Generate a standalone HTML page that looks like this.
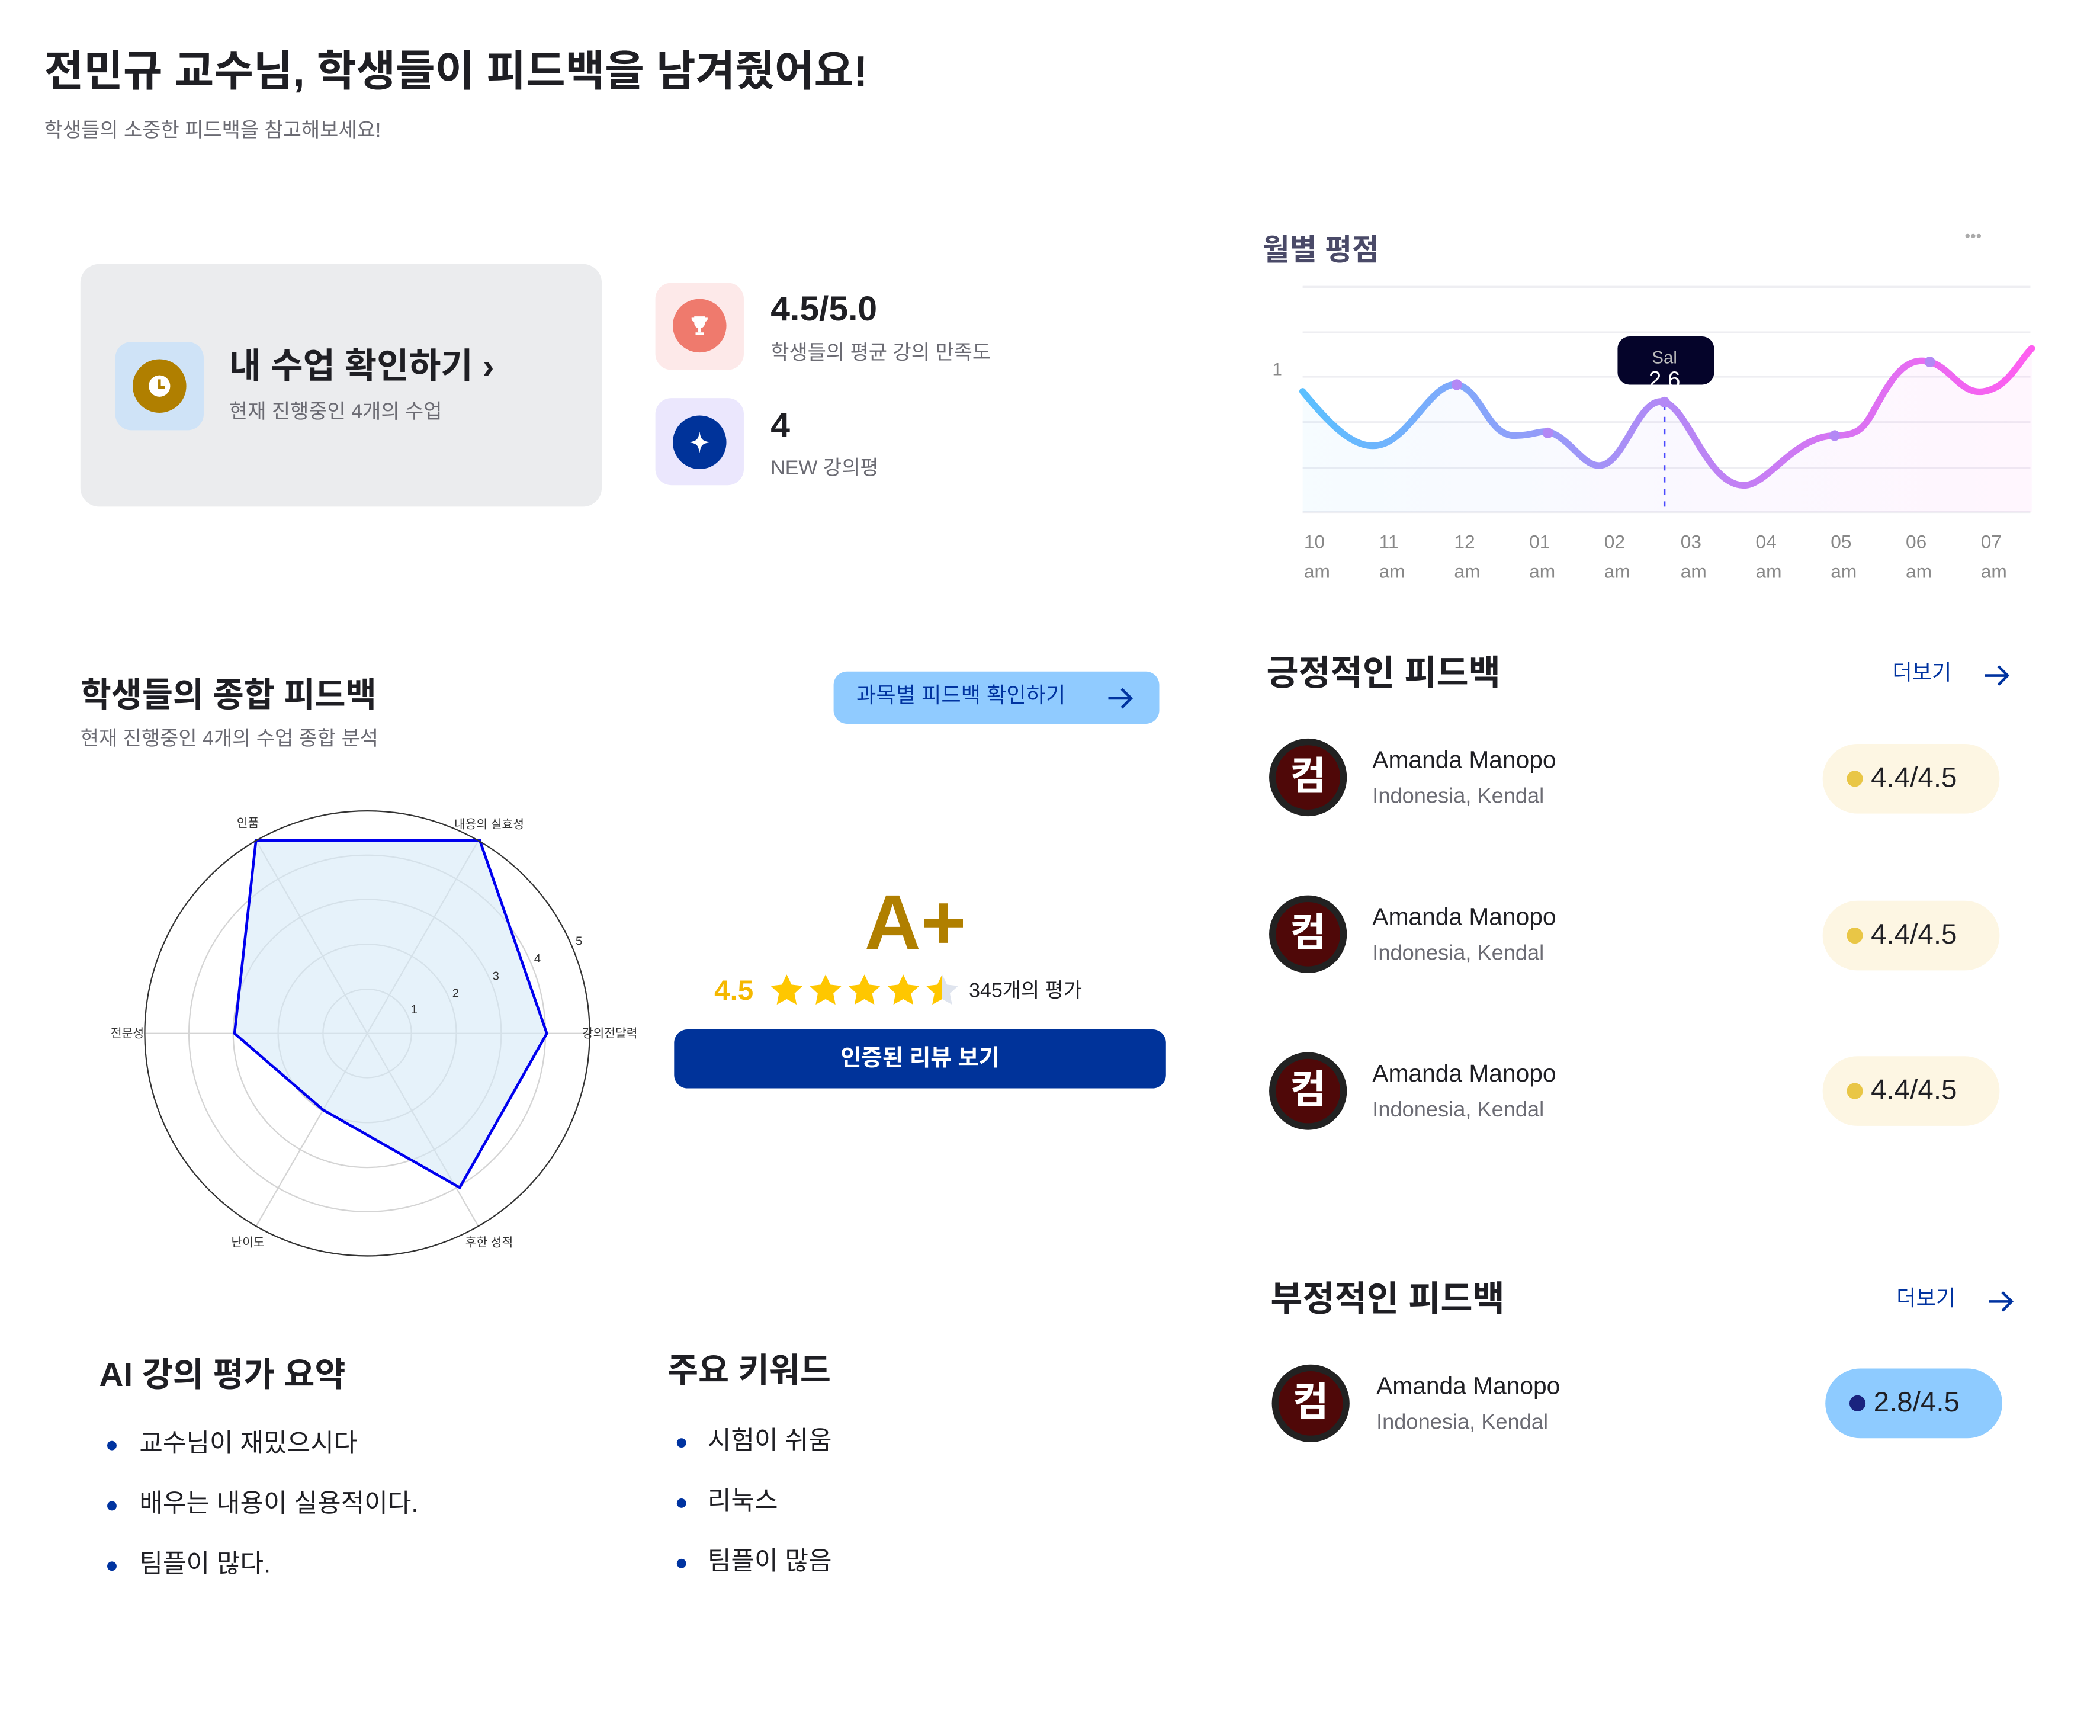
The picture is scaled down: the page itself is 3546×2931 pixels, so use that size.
<!DOCTYPE html>
<html><head><meta charset="utf-8"><style>
html,body{margin:0;padding:0;background:#fff;overflow:hidden}
body{width:3546px;height:2925px}
#w{position:absolute;left:0;top:0;width:1570px;height:1295px;transform:scale(2.263);transform-origin:0 0;font-family:"Liberation Sans","Noto Sans CJK KR",sans-serif;color:#1f1f24}
.t{position:absolute;white-space:nowrap;line-height:1}
.b{font-weight:700}
.g{color:#6b6b73}
.box{position:absolute;border-radius:12px}
.circ{position:absolute;border-radius:50%}
.av{position:absolute;width:48px;height:48px;border-radius:50%;background:#4f0808;border:5px solid #222;color:#fff;font-weight:700;font-size:29px;line-height:48px;text-align:center}
.pill{position:absolute;width:132px;height:52px;border-radius:26px;font-size:21px;line-height:52px}
.pill i{position:absolute;left:18px;top:20px;width:12px;height:12px;border-radius:50%}
.pill span{position:absolute;left:36px}
.dot{position:absolute;width:7px;height:7px;border-radius:50%;background:#0033a0}
</style></head><body><div id="w">

<div class="t b" style="left:33px;top:37px;font-size:32px">전민규 교수님, 학생들이 피드백을 남겨줬어요!</div>
<div class="t g" style="left:33px;top:90px;font-size:15px">학생들의 소중한 피드백을 참고해보세요!</div>

<div class="box" style="left:60px;top:197px;width:389px;height:181px;background:#ebecee;border-radius:14px"></div>
<div class="box" style="left:86px;top:255px;width:66px;height:66px;background:#cfe3f7"></div>
<div class="circ" style="left:99px;top:268px;width:40px;height:40px;background:#b07f00"></div>
<div class="circ" style="left:111px;top:280px;width:16px;height:16px;background:#fff"></div>
<div style="position:absolute;left:118px;top:283px;width:2px;height:6px;background:#b07f00"></div>
<div style="position:absolute;left:118px;top:288px;width:5px;height:2px;background:#b07f00"></div>
<div class="t b" style="left:171px;top:260px;font-size:26px">내 수업 확인하기 ›</div>
<div class="t g" style="left:171px;top:300px;font-size:15px">현재 진행중인 4개의 수업</div>

<div class="box" style="left:489px;top:211px;width:66px;height:65px;background:#fde9e9"></div>
<div class="circ" style="left:502px;top:223px;width:40px;height:40px;background:#ef7a6d"></div>
<svg style="position:absolute;left:512px;top:233px" width="20" height="20" viewBox="0 0 20 20"><path d="M6 3h8v5a4 4 0 0 1-8 0z M4 4h2v3a2 2 0 0 1-2-2z M16 4h-2v3a2 2 0 0 0 2-2z" fill="#fff"/><rect x="9" y="11" width="2" height="4" fill="#fff"/><rect x="7" y="15" width="6" height="2" fill="#fff"/></svg>
<div class="t" style="left:575px;top:217px;font-size:26px;font-weight:600">4.5/5.0</div>
<div class="t g" style="left:575px;top:256px;font-size:15px">학생들의 평균 강의 만족도</div>

<div class="box" style="left:489px;top:297px;width:66px;height:65px;background:#ebe7fd"></div>
<div class="circ" style="left:502px;top:310px;width:40px;height:40px;background:#00339a"></div>
<svg style="position:absolute;left:512px;top:320px" width="20" height="20" viewBox="0 0 20 20"><path d="M10 2 C11 8 12 9 18 10 C12 11 11 12 10 18 C9 12 8 11 2 10 C8 9 9 8 10 2z" fill="#fff"/></svg>
<div class="t" style="left:575px;top:304px;font-size:26px;font-weight:600">4</div>
<div class="t g" style="left:575px;top:342px;font-size:15px">NEW 강의평</div>

<!-- chart -->
<div class="t b" style="left:942px;top:176px;font-size:22px;color:#4a4a68">월별 평점</div>
<div class="t" style="left:1466px;top:170px;font-size:12px;color:#aaa">•••</div>
<svg style="position:absolute;left:940px;top:200px" width="590" height="250" viewBox="940 200 590 250">
<defs>
<linearGradient id="lg" x1="972" x2="1516" y1="0" y2="0" gradientUnits="userSpaceOnUse"><stop offset="0" stop-color="#5bc0ff"/><stop offset="0.5" stop-color="#b388f5"/><stop offset="1" stop-color="#ff5ef0"/></linearGradient>
<linearGradient id="lf" x1="972" x2="1516" y1="0" y2="0" gradientUnits="userSpaceOnUse"><stop offset="0" stop-color="#5bc0ff" stop-opacity=".06"/><stop offset="1" stop-color="#ff5ef0" stop-opacity=".06"/></linearGradient>
</defs>
<g stroke="#eeeef2" stroke-width="1.5">
<line x1="972" x2="1515" y1="214" y2="214"/><line x1="972" x2="1515" y1="248" y2="248"/><line x1="972" x2="1515" y1="281" y2="281"/><line x1="972" x2="1515" y1="315" y2="315"/><line x1="972" x2="1515" y1="349" y2="349"/><line x1="972" x2="1515" y1="382" y2="382"/></g>
<path d="M972 292 C995 320 1015 340 1035 330 C1055 320 1070 285 1087 287 C1105 290 1110 325 1130 325 C1145 325 1150 320 1158 323 C1175 330 1185 355 1200 345 C1215 335 1225 295 1242 300 C1260 305 1275 365 1303 362 C1320 360 1340 325 1369 325 C1385 325 1390 320 1396 310 C1410 285 1420 265 1440 270 C1458 275 1465 300 1487 290 C1500 285 1510 265 1516 260 L1516 382 L972 382z" fill="url(#lf)"/>
<path d="M972 292 C995 320 1015 340 1035 330 C1055 320 1070 285 1087 287 C1105 290 1110 325 1130 325 C1145 325 1150 320 1158 323 C1175 330 1185 355 1200 345 C1215 335 1225 295 1242 300 C1260 305 1275 365 1303 362 C1320 360 1340 325 1369 325 C1385 325 1390 320 1396 310 C1410 285 1420 265 1440 270 C1458 275 1465 300 1487 290 C1500 285 1510 265 1516 260" fill="none" stroke="url(#lg)" stroke-width="5" stroke-linecap="round"/>
<line x1="1242" y1="302" x2="1242" y2="382" stroke="#4a4aff" stroke-width="1.5" stroke-dasharray="4 5"/>
<g fill="#b388f5"><circle cx="1087" cy="287" r="4"/><circle cx="1155" cy="323" r="4"/><circle cx="1242" cy="300" r="4"/><circle cx="1369" cy="325" r="4"/><circle cx="1440" cy="270" r="4"/></g>
<rect x="1207" y="251" width="72" height="36" rx="9" fill="#05042a"/>
<text x="1242" y="271" font-size="13" fill="#bbb" text-anchor="middle" font-family="Liberation Sans">Sal</text>
<text x="1242" y="289" font-size="17" fill="#fff" text-anchor="middle" font-family="Liberation Sans">2.6</text>
<text x="953" y="280" font-size="13" fill="#888" text-anchor="middle" font-family="Liberation Sans">1</text>
<g font-size="14" fill="#888" font-family="Liberation Sans">
<text x="973" y="409">10</text><text x="973" y="431">am</text>
<text x="1029" y="409">11</text><text x="1029" y="431">am</text>
<text x="1085" y="409">12</text><text x="1085" y="431">am</text>
<text x="1141" y="409">01</text><text x="1141" y="431">am</text>
<text x="1197" y="409">02</text><text x="1197" y="431">am</text>
<text x="1254" y="409">03</text><text x="1254" y="431">am</text>
<text x="1310" y="409">04</text><text x="1310" y="431">am</text>
<text x="1366" y="409">05</text><text x="1366" y="431">am</text>
<text x="1422" y="409">06</text><text x="1422" y="431">am</text>
<text x="1478" y="409">07</text><text x="1478" y="431">am</text>
</g></svg>

<!-- overall -->
<div class="t b" style="left:60px;top:507px;font-size:25px">학생들의 종합 피드백</div>
<div class="t g" style="left:60px;top:544px;font-size:15px">현재 진행중인 4개의 수업 종합 분석</div>
<div class="box" style="left:622px;top:501px;width:243px;height:39px;background:#90cbff;border-radius:10px"></div>
<div class="t" style="left:639px;top:512px;font-size:16px;color:#0033a0">과목별 피드백 확인하기</div>
<svg style="position:absolute;left:825px;top:511px" width="22" height="20" viewBox="0 0 22 20"><path d="M2 10h17M12 3l7 7-7 7" fill="none" stroke="#0033a0" stroke-width="2"/></svg>

<svg style="position:absolute;left:60px;top:590px" width="440" height="360" viewBox="60 590 440 360" font-family="Liberation Sans,Noto Sans CJK KR,sans-serif">
<g fill="none" stroke="#d4d4d4" stroke-width="1">
<circle cx="274" cy="771" r="33"/><circle cx="274" cy="771" r="66.5"/><circle cx="274" cy="771" r="100"/><circle cx="274" cy="771" r="133"/>
<line x1="108" y1="771" x2="440" y2="771"/><line x1="191" y1="627" x2="357" y2="915"/><line x1="357" y1="627" x2="191" y2="915"/>
</g>
<polygon points="191,627 358,627 408,771 343,886 241,828 175,771" fill="#d6eaf7" fill-opacity=".6" stroke="#0000ee" stroke-width="2"/>
<circle cx="274" cy="771" r="166" fill="none" stroke="#333" stroke-width="1"/>
<g font-size="9" fill="#333">
<text x="185" y="617" text-anchor="middle">인품</text>
<text x="365" y="618" text-anchor="middle">내용의 실효성</text>
<text x="455" y="774" text-anchor="middle">강의전달력</text>
<text x="365" y="930" text-anchor="middle">후한 성적</text>
<text x="185" y="930" text-anchor="middle">난이도</text>
<text x="95" y="774" text-anchor="middle">전문성</text>
<text x="309" y="756" text-anchor="middle">1</text><text x="340" y="744" text-anchor="middle">2</text><text x="370" y="731" text-anchor="middle">3</text><text x="401" y="718" text-anchor="middle">4</text><text x="432" y="705" text-anchor="middle">5</text>
</g></svg>

<div class="t" style="left:603px;top:660px;width:160px;text-align:center;font-size:58px;font-weight:900;color:#b07f00">A+</div>
<div class="t b" style="left:533px;top:729px;font-size:21px;color:#f5b800">4.5</div>
<svg style="position:absolute;left:573px;top:726px" width="145" height="28" viewBox="0 0 145 28">
<defs><linearGradient id="hs"><stop offset=".5" stop-color="#ffc700"/><stop offset=".5" stop-color="#dfe4ee"/></linearGradient>
<path id="st" d="M13 1l3.6 7.6 8.3 1-6.1 5.7 1.6 8.2L13 19.4 5.6 23.5l1.6-8.2L1.1 9.6l8.3-1z"/></defs>
<use href="#st" x="1" fill="#ffc700"/><use href="#st" x="30" fill="#ffc700"/><use href="#st" x="59" fill="#ffc700"/><use href="#st" x="88" fill="#ffc700"/><use href="#st" x="117" fill="url(#hs)"/>
</svg>
<div class="t" style="left:723px;top:732px;font-size:15px">345개의 평가</div>
<div class="box" style="left:503px;top:768px;width:367px;height:44px;background:#00339a;border-radius:10px"></div>
<div class="t b" style="left:503px;top:781px;width:367px;text-align:center;font-size:17px;color:#fff">인증된 리뷰 보기</div>

<!-- positive -->
<div class="t b" style="left:945px;top:489px;font-size:26px">긍정적인 피드백</div>
<div class="t" style="left:1412px;top:495px;font-size:16px;color:#0033a0">더보기</div>
<svg style="position:absolute;left:1479px;top:494px" width="22" height="20" viewBox="0 0 22 20"><path d="M2 10h17M12 3l7 7-7 7" fill="none" stroke="#0033a0" stroke-width="2"/></svg>

<div class="av" style="left:947px;top:551px">컴</div>
<div class="t" style="left:1024px;top:558px;font-size:18px">Amanda Manopo</div>
<div class="t g" style="left:1024px;top:587px;font-size:16px">Indonesia, Kendal</div>
<div class="pill" style="left:1360px;top:555px;background:#fdf6e3"><i style="background:#e9c646"></i><span>4.4/4.5</span></div>

<div class="av" style="left:947px;top:668px">컴</div>
<div class="t" style="left:1024px;top:675px;font-size:18px">Amanda Manopo</div>
<div class="t g" style="left:1024px;top:704px;font-size:16px">Indonesia, Kendal</div>
<div class="pill" style="left:1360px;top:672px;background:#fdf6e3"><i style="background:#e9c646"></i><span>4.4/4.5</span></div>

<div class="av" style="left:947px;top:785px">컴</div>
<div class="t" style="left:1024px;top:792px;font-size:18px">Amanda Manopo</div>
<div class="t g" style="left:1024px;top:821px;font-size:16px">Indonesia, Kendal</div>
<div class="pill" style="left:1360px;top:788px;background:#fdf6e3"><i style="background:#e9c646"></i><span>4.4/4.5</span></div>

<!-- negative -->
<div class="t b" style="left:948px;top:956px;font-size:26px">부정적인 피드백</div>
<div class="t" style="left:1415px;top:962px;font-size:16px;color:#0033a0">더보기</div>
<svg style="position:absolute;left:1482px;top:961px" width="22" height="20" viewBox="0 0 22 20"><path d="M2 10h17M12 3l7 7-7 7" fill="none" stroke="#0033a0" stroke-width="2"/></svg>
<div class="av" style="left:949px;top:1018px">컴</div>
<div class="t" style="left:1027px;top:1025px;font-size:18px">Amanda Manopo</div>
<div class="t g" style="left:1027px;top:1054px;font-size:16px">Indonesia, Kendal</div>
<div class="pill" style="left:1362px;top:1021px;background:#8ecbff"><i style="background:#1a237e"></i><span>2.8/4.5</span></div>

<!-- AI summary -->
<div class="t b" style="left:74px;top:1014px;font-size:25px">AI 강의 평가 요약</div>
<div class="dot" style="left:80px;top:1075px"></div><div class="t" style="left:104px;top:1068px;font-size:19px">교수님이 재밌으시다</div>
<div class="dot" style="left:80px;top:1120px"></div><div class="t" style="left:104px;top:1113px;font-size:19px">배우는 내용이 실용적이다.</div>
<div class="dot" style="left:80px;top:1165px"></div><div class="t" style="left:104px;top:1158px;font-size:19px">팀플이 많다.</div>

<div class="t b" style="left:498px;top:1011px;font-size:25px">주요 키워드</div>
<div class="dot" style="left:505px;top:1073px"></div><div class="t" style="left:528px;top:1066px;font-size:19px">시험이 쉬움</div>
<div class="dot" style="left:505px;top:1118px"></div><div class="t" style="left:528px;top:1111px;font-size:19px">리눅스</div>
<div class="dot" style="left:505px;top:1163px"></div><div class="t" style="left:528px;top:1156px;font-size:19px">팀플이 많음</div>

</div></body></html>
